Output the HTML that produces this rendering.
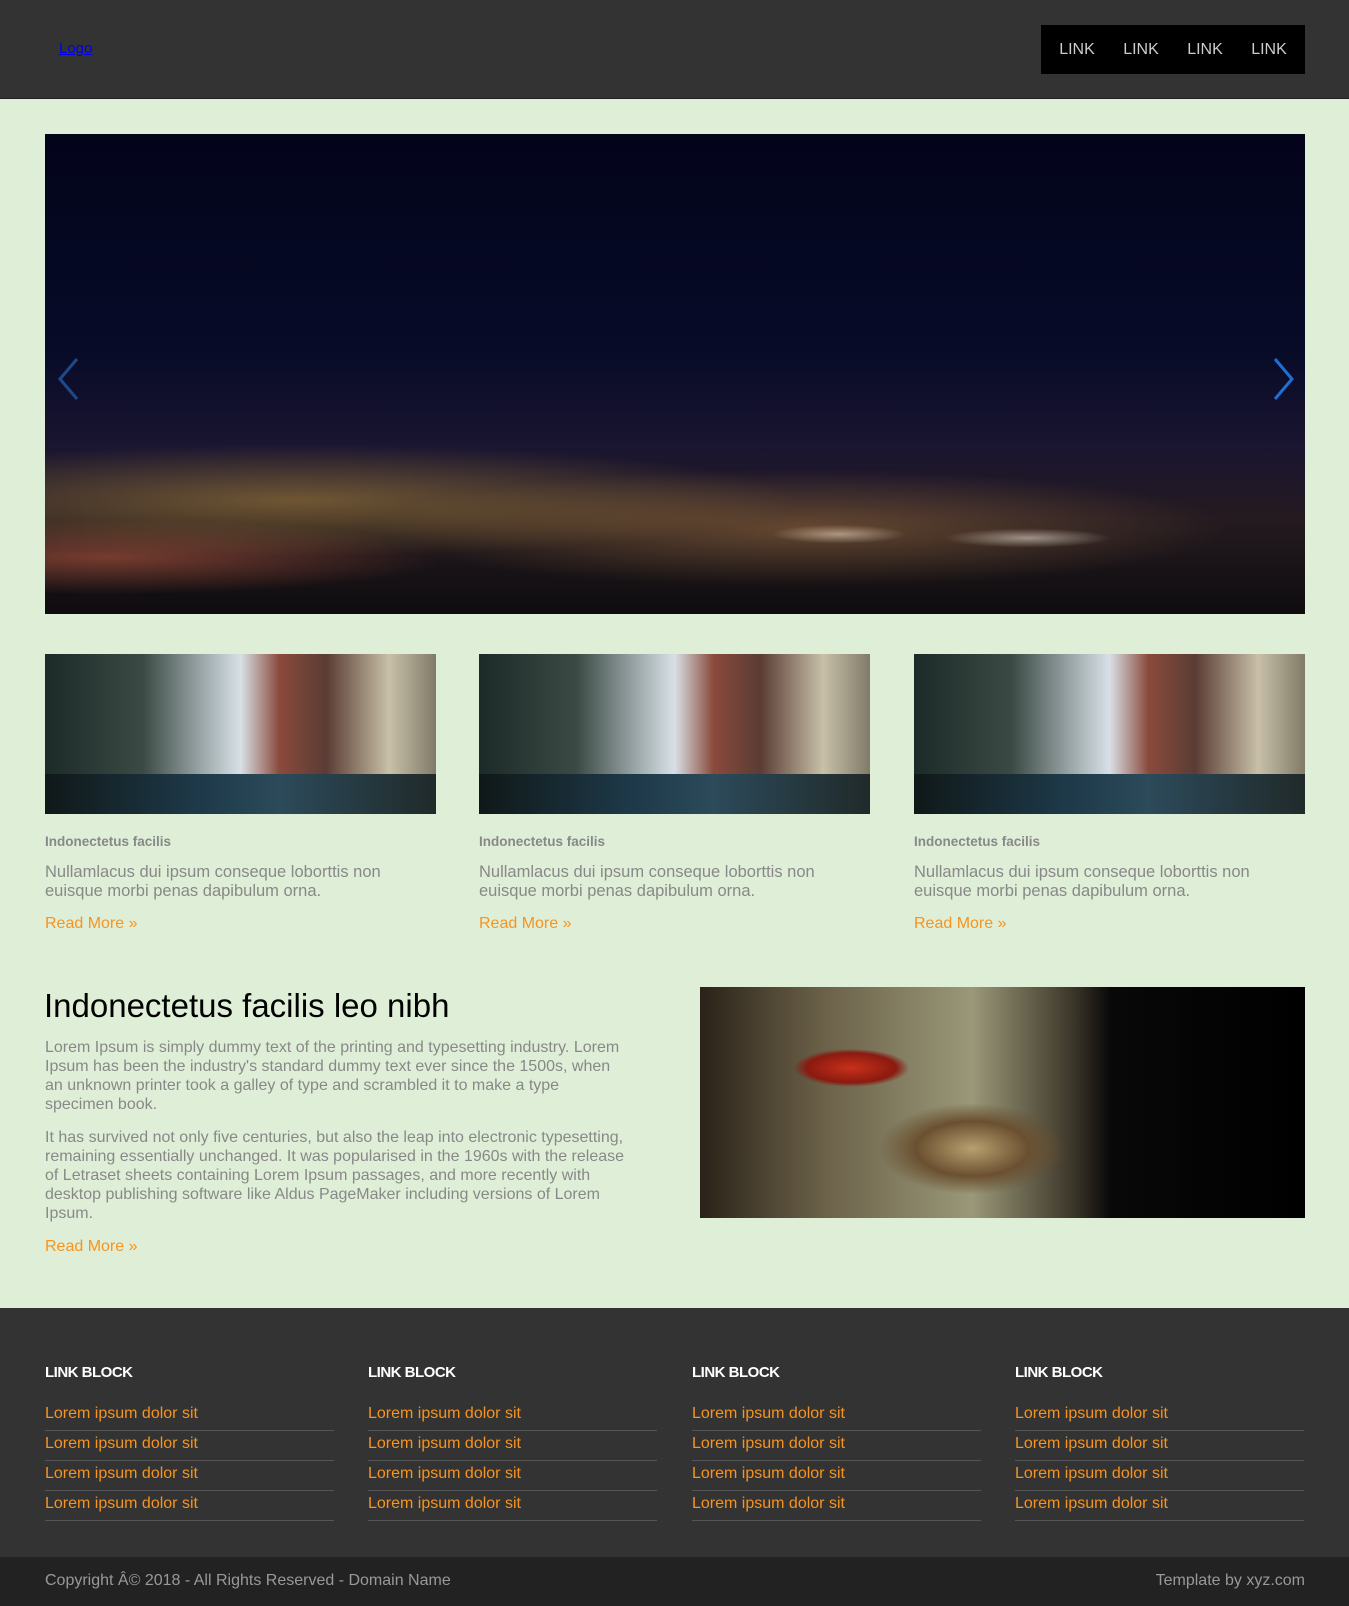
<!DOCTYPE html>
<html><head><meta charset="utf-8"><style>
*{margin:0;padding:0;box-sizing:border-box}
body{width:1349px;height:1606px;background:#dfefd7;font-family:"Liberation Sans",sans-serif;position:relative;overflow:hidden}
.hdr{position:absolute;left:0;top:0;width:1349px;height:99px;background:#333;border-bottom:1px solid #222}
.logo{position:absolute;left:59px;top:40px;color:#00e;font-size:15px;text-decoration:underline}
.nav{position:absolute;left:1041px;top:25px;width:264px;height:49px;background:#000;display:flex;justify-content:space-around;align-items:center;padding:0 4px}
.nav span{color:#ccc;font-size:16px}
.hero{position:absolute;left:45px;top:134px;width:1260px;height:480px;background:linear-gradient(180deg,#03041a 0%,#070b28 45%,#1a1530 65%,#241a20 80%,#0e0c0e 100%);overflow:hidden}
.glow{position:absolute;left:0;top:290px;width:1260px;height:190px;background:radial-gradient(ellipse at 20% 40%,rgba(255,200,80,.35),transparent 35%),radial-gradient(ellipse at 60% 55%,rgba(255,180,90,.3),transparent 40%),radial-gradient(ellipse at 78% 60%,rgba(255,255,255,.5),transparent 6%),radial-gradient(ellipse at 63% 58%,rgba(255,255,255,.5),transparent 6%),radial-gradient(ellipse at 5% 70%,rgba(255,120,80,.4),transparent 20%)}
.arr{position:absolute;top:220px;width:30px;height:50px}
.card{position:absolute;top:654px;width:391px}
.cimg{height:160px;position:relative;background:linear-gradient(90deg,#1c2a28 0%,#3b4a44 25%,#b9c4c8 45%,#d8e0e6 50%,#8a4a3c 60%,#5a3c34 72%,#c8c0a8 88%,#807a68 100%)}
.cimg i{position:absolute;left:0;bottom:0;width:100%;height:40px;background:linear-gradient(90deg,#101818,#1e3a4a 40%,#2c4a5a 60%,#202a2a)}
.ct{margin-top:20px;color:#888;font-size:13.5px;font-weight:bold}
.cp{margin-top:14px;color:#888;font-size:16.5px;line-height:19px}
.rm{color:#f7931e;font-size:16px}
.h2{position:absolute;left:44px;top:987px;font-size:33px;color:#000}
.ptxt{position:absolute;left:45px;top:1038px;width:596px;color:#888;font-size:16px;line-height:19px}
.ptxt p{margin-bottom:14px}
.pimg{position:absolute;left:700px;top:987px;width:605px;height:231px;background:radial-gradient(ellipse at 25% 35%,#c8301a 0,#8a1a10 7%,transparent 9%),radial-gradient(ellipse at 45% 70%,#b8a070,#6a5030 12%,transparent 20%),linear-gradient(90deg,#2a2218 0%,#6a6048 20%,#9a9878 45%,#3a3428 62%,#080808 68%,#000 100%)}
.foot{position:absolute;left:0;top:1308px;width:1349px;height:249px;background:#333}
.col{position:absolute;top:1364px;width:289px}
.col h4{color:#fff;font-size:15px;letter-spacing:-.5px;margin-bottom:20px}
.col div{color:#f7931e;font-size:16px;height:30px;line-height:26px;border-bottom:1px solid #555}
.bot{position:absolute;left:0;top:1557px;width:1349px;height:49px;background:#222;color:#999;font-size:16px}
</style></head><body>
<div class="hdr"><a class="logo">Logo</a><div class="nav"><span>LINK</span><span>LINK</span><span>LINK</span><span>LINK</span></div></div>
<div class="hero"><div class="glow"></div>
<svg class="arr" style="left:10px" viewBox="0 0 30 50"><path d="M22 5 L5 25 L22 45" stroke="#1d4a8a" stroke-width="3" fill="none"/></svg>
<svg class="arr" style="left:1222px" viewBox="0 0 30 50"><path d="M8 5 L25 25 L8 45" stroke="#1e6fd8" stroke-width="3" fill="none"/></svg>
</div>
<div class="card" style="left:45px"><div class="cimg"><i></i></div><div class="ct">Indonectetus facilis</div><div class="cp">Nullamlacus dui ipsum conseque loborttis non euisque morbi penas dapibulum orna.</div><div class="rm" style="margin-top:14px">Read More »</div></div>
<div class="card" style="left:479px"><div class="cimg"><i></i></div><div class="ct">Indonectetus facilis</div><div class="cp">Nullamlacus dui ipsum conseque loborttis non euisque morbi penas dapibulum orna.</div><div class="rm" style="margin-top:14px">Read More »</div></div>
<div class="card" style="left:914px"><div class="cimg"><i></i></div><div class="ct">Indonectetus facilis</div><div class="cp">Nullamlacus dui ipsum conseque loborttis non euisque morbi penas dapibulum orna.</div><div class="rm" style="margin-top:14px">Read More »</div></div>
<div class="h2">Indonectetus facilis leo nibh</div>
<div class="ptxt"><p>Lorem Ipsum is simply dummy text of the printing and typesetting industry. Lorem Ipsum has been the industry's standard dummy text ever since the 1500s, when<br>an unknown printer took a galley of type and scrambled it to make a type<br>specimen book.</p><p>It has survived not only five centuries, but also the leap into electronic typesetting, remaining essentially unchanged. It was popularised in the 1960s with the release of Letraset sheets containing Lorem Ipsum passages, and more recently with desktop publishing software like Aldus PageMaker including versions of Lorem<br>Ipsum.</p><div class="rm">Read More »</div></div>
<div class="pimg"></div>
<div class="foot"></div>
<div class="col" style="left:45px"><h4>LINK BLOCK</h4><div>Lorem ipsum dolor sit</div><div>Lorem ipsum dolor sit</div><div>Lorem ipsum dolor sit</div><div>Lorem ipsum dolor sit</div></div>
<div class="col" style="left:368px"><h4>LINK BLOCK</h4><div>Lorem ipsum dolor sit</div><div>Lorem ipsum dolor sit</div><div>Lorem ipsum dolor sit</div><div>Lorem ipsum dolor sit</div></div>
<div class="col" style="left:692px"><h4>LINK BLOCK</h4><div>Lorem ipsum dolor sit</div><div>Lorem ipsum dolor sit</div><div>Lorem ipsum dolor sit</div><div>Lorem ipsum dolor sit</div></div>
<div class="col" style="left:1015px"><h4>LINK BLOCK</h4><div>Lorem ipsum dolor sit</div><div>Lorem ipsum dolor sit</div><div>Lorem ipsum dolor sit</div><div>Lorem ipsum dolor sit</div></div>
<div class="bot"><span style="position:absolute;left:45px;top:15px">Copyright Â© 2018 - All Rights Reserved - Domain Name</span><span style="position:absolute;right:44px;top:15px">Template by xyz.com</span></div>
</body></html>
